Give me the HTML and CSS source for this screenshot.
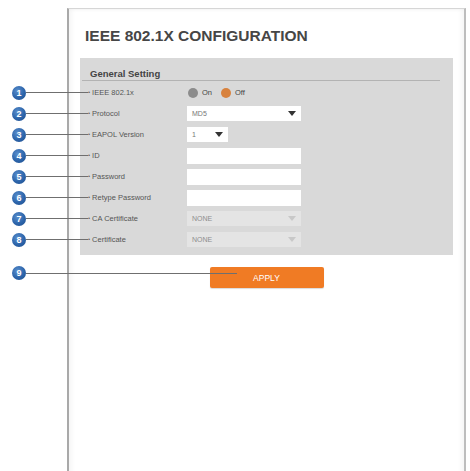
FILE: index.html
```html
<!DOCTYPE html>
<html lang="en">
<head>
<meta charset="utf-8">
<title>IEEE 802.1X Configuration</title>
<link rel="stylesheet" href="styles.css">
</head>
<body>
<div class="frame">
  <h1 class="title">IEEE 802.1X CONFIGURATION</h1>
  <div class="panel">
    <div class="panel-head">General Setting</div>

    <div class="row">
      <span class="pin"><span class="num">1</span><span class="lead"></span></span>
      <span class="label">IEEE 802.1x</span>
      <div class="radios">
        <span class="radio"><span class="dot dot-gray"></span>On</span>
        <span class="radio"><span class="dot dot-orange"></span>Off</span>
      </div>
    </div>

    <div class="row">
      <span class="pin"><span class="num">2</span><span class="lead"></span></span>
      <span class="label">Protocol</span>
      <div class="select wide"><span>MD5</span><span class="arrow"></span></div>
    </div>

    <div class="row">
      <span class="pin"><span class="num">3</span><span class="lead"></span></span>
      <span class="label">EAPOL Version</span>
      <div class="select narrow"><span>1</span><span class="arrow"></span></div>
    </div>

    <div class="row">
      <span class="pin"><span class="num">4</span><span class="lead"></span></span>
      <span class="label">ID</span>
      <div class="input"></div>
    </div>

    <div class="row">
      <span class="pin"><span class="num">5</span><span class="lead"></span></span>
      <span class="label">Password</span>
      <div class="input"></div>
    </div>

    <div class="row">
      <span class="pin"><span class="num">6</span><span class="lead"></span></span>
      <span class="label">Retype Password</span>
      <div class="input"></div>
    </div>

    <div class="row">
      <span class="pin"><span class="num">7</span><span class="lead"></span></span>
      <span class="label">CA Certificate</span>
      <div class="select wide disabled"><span>NONE</span><span class="arrow"></span></div>
    </div>

    <div class="row">
      <span class="pin"><span class="num">8</span><span class="lead"></span></span>
      <span class="label">Certificate</span>
      <div class="select wide disabled"><span>NONE</span><span class="arrow"></span></div>
    </div>
  </div>

  <div class="actions">
    <span class="pin pin-apply"><span class="num">9</span><span class="lead"></span></span>
    <button class="apply" type="button">APPLY</button>
  </div>
</div>
</body>
</html>
```

FILE: styles.css
```css
html, body {
  margin: 0;
  padding: 0;
  background: #ffffff;
  overflow: hidden;
}

body {
  font-family: "Liberation Sans", Arial, sans-serif;
  color: #444;
}

.frame {
  margin: 8px 0 0 67px;
  width: 395px;
  height: 480px;
  border-top: 1px solid #d6d6d6;
  border-left: 2px solid #a9a9a9;
  border-right: 2px solid #bdbdbd;
  box-shadow: inset 3px 0 4px rgba(0, 0, 0, 0.04), inset -3px 0 4px rgba(0, 0, 0, 0.04);
  position: relative;
}

.title {
  margin: 18px 0 0 16px;
  font-size: 15.5px;
  line-height: 18px;
  font-weight: bold;
  color: #464646;
  letter-spacing: 0;
}

.panel {
  margin: 13px 0 0 11px;
  width: 373px;
  background: #d9d9d9;
  padding: 0 0 5px 8px;
  box-sizing: border-box;
}

.panel-head {
  margin: 0 13px 1px -6px;
  padding: 10px 0 0 8px;
  height: 12px;
  line-height: 12px;
  font-size: 9.5px;
  font-weight: bold;
  color: #444;
  border-bottom: 1px solid #b3b3b3;
}

.row {
  position: relative;
  height: 21px;
  display: grid;
  grid-template-columns: 99px 1fr;
  align-items: center;
}

.label {
  font-size: 7.5px;
  color: #555;
  white-space: nowrap;
}

.label::before {
  content: "•";
  font-size: 6px;
  color: #666;
  margin-right: 2px;
  vertical-align: 1px;
}

.pin {
  position: absolute;
  left: -76px;
  width: 76px;
  top: 50%;
  margin-top: -7px;
  height: 14px;
  display: flex;
  align-items: center;
}

.num {
  flex: 0 0 14px;
  height: 14px;
  border-radius: 50%;
  background: radial-gradient(circle at 40% 35%, #5a8fcd 0%, #2c64aa 55%, #1d4c8a 100%);
  color: #fff;
  font-size: 9px;
  font-weight: bold;
  line-height: 14px;
  text-align: center;
}

.lead {
  flex: 1;
  height: 1px;
  background: #6f6f6f;
}

.radios {
  display: flex;
  align-items: center;
  gap: 8px;
  font-size: 7.5px;
  color: #444;
}

.radio {
  display: flex;
  align-items: center;
  gap: 4px;
  margin-left: 1px;
}

.dot {
  width: 10px;
  height: 10px;
  border-radius: 50%;
}

.dot-gray {
  background: #8c8c8c;
}

.dot-orange {
  background: #d8823e;
}

.select {
  height: 15px;
  background: #ffffff;
  display: flex;
  align-items: center;
  justify-content: space-between;
  padding: 0 5px 0 5px;
  box-sizing: border-box;
  font-size: 7px;
  color: #777;
}

.select.wide {
  width: 114px;
}

.select.narrow {
  width: 41px;
}

.arrow {
  width: 0;
  height: 0;
  border-left: 4.5px solid transparent;
  border-right: 4.5px solid transparent;
  border-top: 5px solid #333;
}

.select.disabled {
  background: #e4e4e4;
  color: #8e8e8e;
}

.select.disabled .arrow {
  border-top-color: #c8c8c8;
}

.input {
  width: 114px;
  height: 16px;
  background: #ffffff;
}

.actions {
  position: relative;
  margin: 12px 0 0 11px;
  width: 373px;
  display: flex;
  justify-content: center;
}

.pin-apply {
  left: -68px;
  width: 225px;
  top: 0;
  margin-top: -1px;
}

.apply {
  width: 114px;
  height: 21px;
  border: none;
  border-radius: 2px;
  background: #f07b24;
  color: #fff;
  font-family: "Liberation Sans", Arial, sans-serif;
  font-size: 8.5px;
  padding: 0;
  margin: 0;
  box-shadow: 0 1px 1px rgba(0, 0, 0, 0.15);
}
```
